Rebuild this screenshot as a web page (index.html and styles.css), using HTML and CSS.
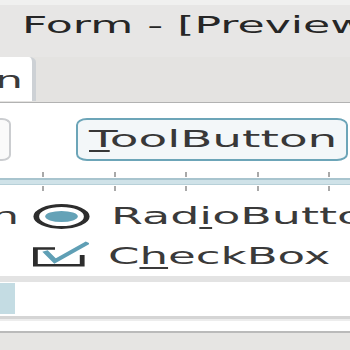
FILE: index.html
```html
<!DOCTYPE html>
<html lang="en">
<head>
    <meta charset="UTF-8">
    <meta name="viewport" content="width=device-width, initial-scale=1.0">
    <title>Form - [Preview]</title>
    <link rel="stylesheet" href="styles.css">
</head>
<body>
    <div class="window">
        <div class="titlebar">
            <span class="wide">Form - [Preview] - Fusion</span>
        </div>
        <div class="tabbar">
            <div class="tab"><span class="wide tab-label">n</span></div>
        </div>
        <div class="content">
            <div class="buttons">
                <div class="pushbutton"></div>
                <div class="toolbutton"><span class="wide tool-label"><u>T</u>oolButton</span></div>
            </div>
            <div class="slider">
                <div class="ticks"><i></i><i></i><i></i><i></i><i></i></div>
                <div class="groove"></div>
                <div class="ticks"><i></i><i></i><i></i><i></i><i></i></div>
            </div>
            <div class="option">
                <span class="wide cut">n</span>
                <svg class="radio" viewBox="0 0 28 25" preserveAspectRatio="none">
                    <ellipse cx="14" cy="12.5" rx="12.4" ry="11" fill="#fff" stroke="#2d2d2d" stroke-width="2.8"/>
                    <ellipse cx="14" cy="12.5" rx="8" ry="5.5" fill="#64a2b7"/>
                </svg>
                <span class="wide label">Rad<u>i</u>oButton</span>
            </div>
            <div class="option check-row">
                <span class="cut-space"></span>
                <svg class="checkbox" viewBox="0 0 28 26" preserveAspectRatio="none">
                    <path d="M11 7.5 H1.2 V24.3 H24.6 V14" fill="none" stroke="#2d2d2d" stroke-width="2.4"/>
                    <path d="M6 10 L11 20 L27.5 1.5" fill="none" stroke="#5f9fb5" stroke-width="3"/>
                </svg>
                <span class="wide label check-label">C<u>h</u>eckBox</span>
            </div>
            <div class="progress">
                <div class="chunk"></div>
            </div>
            <div class="statusgap"></div>
        </div>
        <div class="footer"></div>
    </div>
</body>
</html>
```

FILE: styles.css
```css
body {
    margin: 0;
    padding: 0;
    background-color: #ffffff;
    overflow: hidden;
}
.window {
    width: 350px;
    height: 350px;
    overflow: hidden;
    font-family: "DejaVu Sans", sans-serif;
    font-size: 23px;
    line-height: 27px;
    color: #3a3a3a;
}
.wide {
    display: inline-block;
    white-space: nowrap;
    transform: scaleX(1.92);
    transform-origin: left center;
}
u {
    text-decoration-thickness: 2px;
    text-underline-offset: 3px;
}

/* title bar */
.titlebar {
    height: 57px;
    box-sizing: border-box;
    border-top: 5px solid #f0f0ef;
    background-color: #e7e6e5;
    padding: 7px 0 0 22px;
    color: #262626;
    overflow: hidden;
}

/* tabs */
.tabbar {
    height: 45px;
    background-color: #e4e3e1;
    border-bottom: 1px solid #b2b2b2;
}
.tab {
    width: 36px;
    height: 44px;
    box-sizing: border-box;
    background-color: #ffffff;
    border-right: 4px solid #cdd1d5;
    border-top-right-radius: 7px 5px;
    padding-top: 10px;
    overflow: hidden;
}
.tab-label {
    margin-left: -5px;
}

/* form area */
.content {
    background-color: #ffffff;
}
.buttons {
    display: flex;
    align-items: stretch;
    height: 43px;
    margin-top: 15px;
}
.pushbutton {
    width: 9px;
    border: 2px solid #cbcdd0;
    border-left: none;
    border-radius: 0 9px 9px 0 / 0 6px 6px 0;
    background-color: #fafafa;
}
.toolbutton {
    margin-left: 65px;
    width: 272px;
    flex: none;
    box-sizing: border-box;
    border: 2px solid #6ca5b8;
    border-radius: 11px / 7px;
    background-color: #f3f7f9;
    padding-left: 11px;
    display: flex;
    align-items: center;
    color: #383838;
}
.tool-label {
    transform: scaleX(2.04);
}

.slider {
    margin-top: 11px;
}
.ticks {
    display: flex;
    gap: 69.5px;
    padding-left: 42px;
    height: 5px;
}
.ticks i {
    width: 2px;
    height: 5px;
    background-color: #a9a9a9;
}
.groove {
    height: 4px;
    margin: 1px 0;
    border-top: 2px solid #a8c4ce;
    border-bottom: 1px solid #b7d0d8;
    background-color: #cfe2e8;
}

.option {
    display: flex;
    align-items: center;
    height: 25px;
    margin-top: 13px;
}
.cut {
    width: 0;
    margin-left: -9px;
    margin-right: 42px;
}
.cut-space {
    width: 33px;
}
.radio {
    width: 57px;
    height: 25px;
    flex: none;
}
.checkbox {
    width: 56px;
    height: 26px;
    flex: none;
    margin-top: -2px;
}
.label {
    margin-left: 21px;
    transform: scaleX(2);
}
.check-label {
    margin-left: 19px;
    padding-top: 3px;
    transform: scaleX(1.96);
}

.progress {
    margin-top: 9px;
    border-top: 6px solid #e3e3e3;
    border-bottom: 3px solid #d5d5d5;
    padding-top: 1px;
    box-sizing: border-box;
    height: 43px;
}
.chunk {
    width: 15px;
    height: 31px;
    background-color: #c4dce3;
}
.statusgap {
    height: 10px;
    border-top: 2px solid #ededed;
}
.footer {
    height: 30px;
    border-top: 2px solid #bababa;
    background-color: #e6e5e3;
}
```
